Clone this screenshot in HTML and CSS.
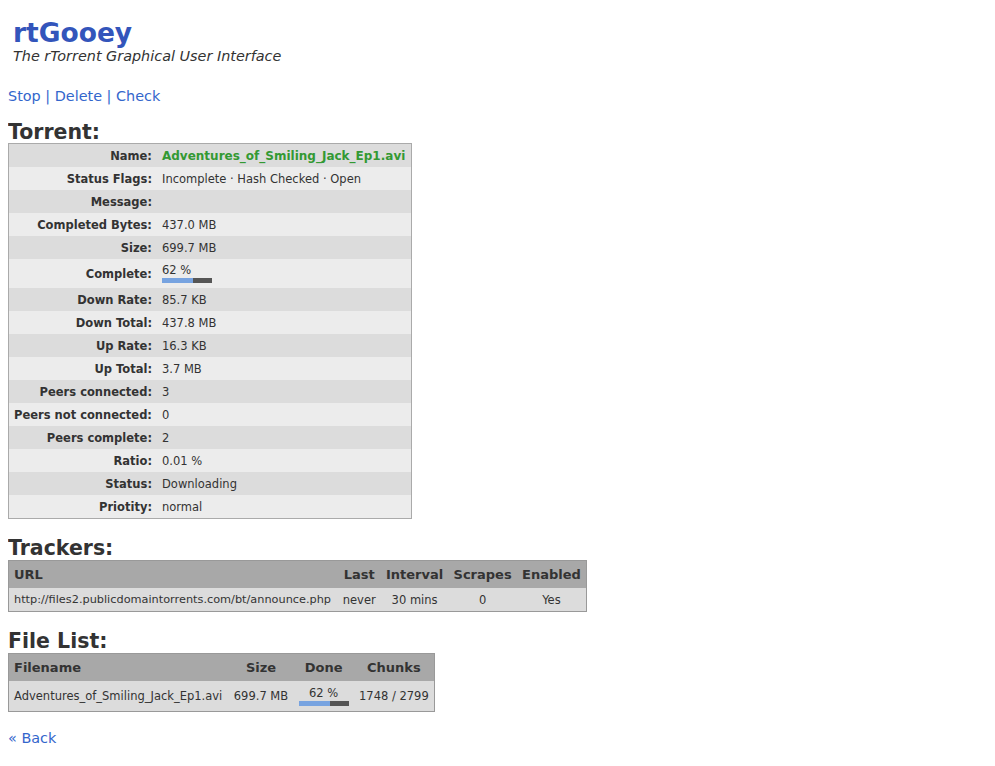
FILE: index.html
```html
<!DOCTYPE html>
<html>
<head>
<meta charset="utf-8">
<title>rtGooey</title>
<link rel="stylesheet" href="styles.css">
</head>
<body>
<div class="header">
  <h1 class="logo">rtGooey</h1>
  <div class="tagline">The rTorrent Graphical User Interface</div>
</div>
<div class="actions"><a href="#">Stop</a> | <a href="#">Delete</a> | <a href="#">Check</a></div>

<h2 class="section first">Torrent:</h2>
<table class="info">
  <tr class="odd"><th>Name:</th><td class="name">Adventures_of_Smiling_Jack_Ep1.avi</td></tr>
  <tr class="even"><th>Status Flags:</th><td>Incomplete · Hash Checked · Open</td></tr>
  <tr class="odd"><th>Message:</th><td></td></tr>
  <tr class="even"><th>Completed Bytes:</th><td>437.0 MB</td></tr>
  <tr class="odd"><th>Size:</th><td>699.7 MB</td></tr>
  <tr class="even prog-row"><th>Complete:</th><td><div class="pct">62 %</div><div class="bar"><div class="fill" style="width:62%"></div></div></td></tr>
  <tr class="odd"><th>Down Rate:</th><td>85.7 KB</td></tr>
  <tr class="even"><th>Down Total:</th><td>437.8 MB</td></tr>
  <tr class="odd"><th>Up Rate:</th><td>16.3 KB</td></tr>
  <tr class="even"><th>Up Total:</th><td>3.7 MB</td></tr>
  <tr class="odd"><th>Peers connected:</th><td>3</td></tr>
  <tr class="even"><th>Peers not connected:</th><td>0</td></tr>
  <tr class="odd"><th>Peers complete:</th><td>2</td></tr>
  <tr class="even"><th>Ratio:</th><td>0.01 %</td></tr>
  <tr class="odd"><th>Status:</th><td>Downloading</td></tr>
  <tr class="even"><th>Priotity:</th><td>normal</td></tr>
</table>

<h2 class="section">Trackers:</h2>
<table class="list trackers">
  <tr><th class="left">URL</th><th>Last</th><th>Interval</th><th>Scrapes</th><th>Enabled</th></tr>
  <tr><td class="left url">http://files2.publicdomaintorrents.com/bt/announce.php</td><td>never</td><td>30 mins</td><td>0</td><td>Yes</td></tr>
</table>

<h2 class="section">File List:</h2>
<table class="list files">
  <tr><th class="left">Filename</th><th>Size</th><th>Done</th><th>Chunks</th></tr>
  <tr class="prog-row"><td class="left">Adventures_of_Smiling_Jack_Ep1.avi</td><td>699.7 MB</td><td><div class="pct">62 %</div><div class="bar"><div class="fill" style="width:62%"></div></div></td><td>1748 / 2799</td></tr>
</table>

<div class="back">« <a href="#">Back</a></div>
</body>
</html>
```

FILE: styles.css
```css
body {
  margin: 8px;
  font-family: "DejaVu Sans", Verdana, sans-serif;
  font-size: 11.5px;
  color: #333;
  background: #fff;
}
a { color: #3366cc; text-decoration: none; }

.header { padding: 10px 0 0 5px; }
.logo {
  margin: 0;
  font-size: 26.5px;
  line-height: 30px;
  color: #3355bb;
  font-weight: bold;
}
.tagline {
  font-style: italic;
  font-size: 14.4px;
  line-height: 16px;
  color: #333;
}
.actions {
  margin-top: 23px;
  font-size: 14.4px;
  line-height: 18px;
  color: #3366cc;
}

.section {
  margin: 18px 0 0;
  font-size: 20.5px;
  line-height: 22px;
  color: #333;
}
.section.first { margin-top: 16px; }

table { border-collapse: collapse; }

.info {
  border: 1px solid #aaa;
  width: 404px;
}
.info th, .info td { height: 23px; padding: 0 5px; white-space: nowrap; }
.info th { text-align: right; font-weight: bold; width: 1%; }
.info td { text-align: left; }
.info .odd { background: #dcdcdc; }
.info .even { background: #ececec; }
.info .name { color: #339933; font-weight: bold; font-size: 12px; }
.info .prog-row th, .info .prog-row td { height: 29px; }

.pct { line-height: 13px; }
.bar {
  width: 50px;
  height: 5px;
  background: #555;
  margin-top: 1px;
}
.fill { height: 5px; background: #77a3e0; }

.list {
  border: 1px solid #999;
}
.list th {
  background: #a8a8a8;
  font-size: 13px;
  font-weight: bold;
  height: 27px;
  padding: 0 5px;
  text-align: center;
  white-space: nowrap;
}
.list td {
  background: #dcdcdc;
  height: 23px;
  padding: 0 5px;
  text-align: center;
  white-space: nowrap;
}
.list .prog-row td { height: 30px; }
.list .left { text-align: left; }
.url { font-size: 11.3px; }
.trackers { width: 579px; margin-top: 1px; }
.files { width: 427px; margin-top: 1px; }
.files .bar { margin: 1px auto 0; }

.back {
  margin-top: 18px;
  font-size: 14.4px;
  color: #3366cc;
}
```
